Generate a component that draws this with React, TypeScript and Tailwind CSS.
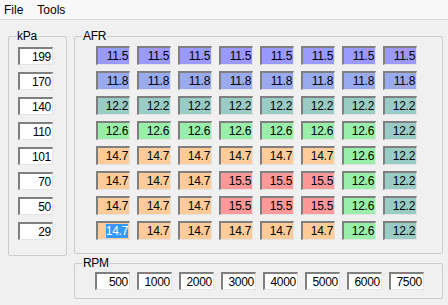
import React from "react";

const COLORS: Record<string, string> = {
  "11.5": "bg-[#9999ff]",
  "11.8": "bg-[#99aaee]",
  "12.2": "bg-[#99ccc4]",
  "12.6": "bg-[#99eeaa]",
  "14.7": "bg-[#ffcc99]",
  "15.5": "bg-[#ff9999]",
};

const GRID: string[][] = [
  ["11.5", "11.5", "11.5", "11.5", "11.5", "11.5", "11.5", "11.5"],
  ["11.8", "11.8", "11.8", "11.8", "11.8", "11.8", "11.8", "11.8"],
  ["12.2", "12.2", "12.2", "12.2", "12.2", "12.2", "12.2", "12.2"],
  ["12.6", "12.6", "12.6", "12.6", "12.6", "12.6", "12.6", "12.2"],
  ["14.7", "14.7", "14.7", "14.7", "14.7", "14.7", "12.6", "12.2"],
  ["14.7", "14.7", "14.7", "15.5", "15.5", "15.5", "12.6", "12.2"],
  ["14.7", "14.7", "14.7", "15.5", "15.5", "15.5", "12.6", "12.2"],
  ["14.7", "14.7", "14.7", "14.7", "14.7", "14.7", "12.6", "12.2"],
];

const KPA = ["199", "170", "140", "110", "101", "70", "50", "29"];
const RPM = ["500", "1000", "2000", "3000", "4000", "5000", "6000", "7500"];

const sunken =
  "border-t-2 border-l-2 border-r border-b border-t-[#7f7f7f] border-l-[#7f7f7f] border-r-[#e3e3e3] border-b-[#e3e3e3]";

function Box({ value, w, h, bg }: { value: string; w: string; h: string; bg: string }) {
  return (
    <div className={`${w} ${h} ${bg} ${sunken} flex items-center justify-end pr-[1px] text-black leading-[14px]`}>
      {value}
    </div>
  );
}

export default function App() {
  return (
    <div
      className="w-[448px] h-[305px] bg-[#f0f0f0] text-[12px] tracking-[-0.3px] text-black overflow-hidden"
      style={{ fontFamily: '"Liberation Sans", Arial, sans-serif' }}
    >
      <div className="h-[20px] bg-[#f8f8f8] border-b border-[#d7d7d7] flex items-center text-[12px] tracking-normal">
        <span className="ml-[4px]">File</span>
        <span className="ml-[14px]">Tools</span>
      </div>
      <div className="flex pl-[8px] pt-[9px]">
        <fieldset className="w-[59px] h-[227px] border border-[#cbcbcb] rounded-[2px]">
          <legend className="ml-[7px] px-[1px] leading-[14px]">kPa</legend>
          <div className="flex flex-col gap-[7px] pl-[9px] pt-[4px]">
            {KPA.map((k) => (
              <Box key={k} value={k} w="w-[35px]" h="h-[18px]" bg="bg-white" />
            ))}
          </div>
        </fieldset>
        <div className="ml-[7px] flex flex-col gap-[2px]">
          <fieldset className="w-[369px] h-[225px] border border-[#cbcbcb] rounded-[2px]">
            <legend className="ml-[7px] px-[1px] leading-[14px]">AFR</legend>
            <div className="grid grid-cols-[repeat(8,34px)] gap-x-[7px] gap-y-[6px] pl-[21px] pt-[3px]">
              {GRID.flatMap((row, r) =>
                row.map((v, c) => (
                  <div
                    key={`${r}-${c}`}
                    className={`w-[34px] h-[19px] ${COLORS[v]} ${sunken} flex items-center justify-end pr-[1px] leading-[14px]`}
                  >
                    {r === 7 && c === 0 ? (
                      <span className="bg-[#3399ff] text-white">{v}</span>
                    ) : (
                      v
                    )}
                  </div>
                ))
              )}
            </div>
          </fieldset>
          <fieldset className="w-[369px] h-[43px] border border-[#cbcbcb] rounded-[2px]">
            <legend className="ml-[7px] px-[1px] leading-[14px]">RPM</legend>
            <div className="flex gap-[7px] pl-[20px] pt-[2px]">
              {RPM.map((r) => (
                <Box key={r} value={r} w="w-[35px]" h="h-[18px]" bg="bg-white" />
              ))}
            </div>
          </fieldset>
        </div>
      </div>
    </div>
  );
}
